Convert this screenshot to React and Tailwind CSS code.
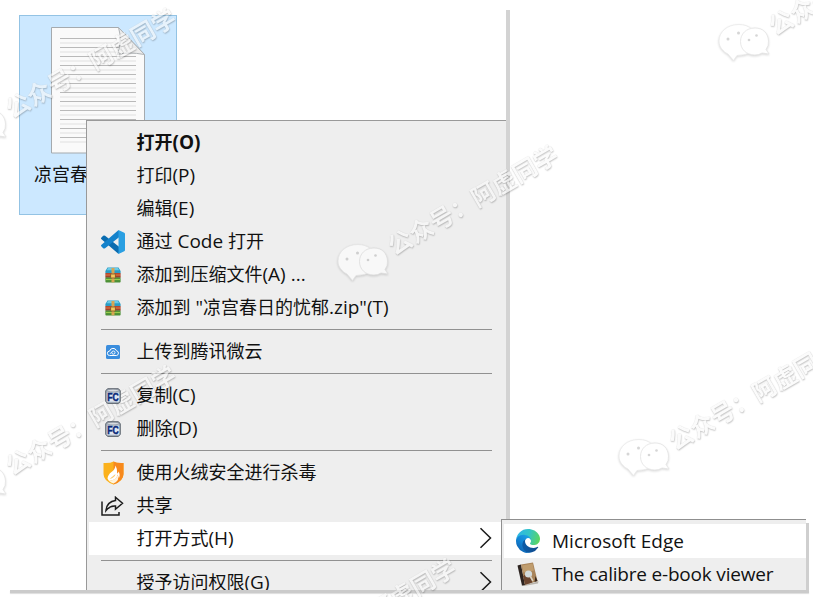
import clsx from 'clsx'

function CodeIcon() {
  return (
    <svg width="24" height="24" viewBox="0 0 100 100">
      <path d="M1 32l8-8q4-3 8 0l58 46v28q-5 0-9-4L1 38q-2-3 0-6z" fill="#0a6cb0" />
      <path d="M1 68l8 8q4 3 8 0l58-46V2q-5 0-9 4L1 62q-2 3 0 6z" fill="#1482cb" />
      <path d="M68 96q4 5 9 2l20-9q3-2 3-6V17q0-4-3-6L77 2q-5-3-9 2 5-2 5 4v84q0 6-5 4z" fill="#2a9fe2" />
    </svg>
  )
}

function ArchiveIcon() {
  return (
    <svg width="16" height="16" viewBox="0 0 16 16">
      <path d="M2.5 0.5h11l2.100 3.500v2.500H0.400V4z" fill="#2b9cc4" />
      <path d="M3 1h10l1.200 2.200H1.800z" fill="#68cbe8" />
      <rect x="0.400" y="6" width="15.200" height="4.500" rx="0.600" fill="#b5482f" />
      <path d="M0.500 10.200h15" stroke="#5b3324" strokeWidth="0.800" />
      <rect x="0.400" y="10.600" width="15.200" height="5" rx="0.800" fill="#4c9036" />
      <path d="M1 12.500h14" stroke="#9acb4c" strokeWidth="1.200" />
      <path d="M1 8h14" stroke="#d9763f" />
      <rect x="6.500" y="1" width="3" height="14.300" fill="#d6a552" />
      <rect x="5.600" y="7" width="4.800" height="4" rx="0.500" fill="#f3c75c" stroke="#6b4520" strokeWidth="0.700" />
    </svg>
  )
}

function CloudIcon() {
  return (
    <svg width="14" height="14" viewBox="0 0 14 14" fill="none" stroke="#fff">
      <rect width="14" height="14" rx="1.5" fill="#3a8ddd" stroke="none" />
      <path d="M3.600 10.500a2.200 2.200 0 0 1 0-4.400 3.600 3.600 0 0 1 6.900-.3A2.400 2.400 0 0 1 10.600 10.500z" />
      <circle cx="7.400" cy="7.600" r="1.600" strokeWidth="0.900" />
      <path d="M3.800 8.800l2-1.500" strokeWidth="0.800" />
    </svg>
  )
}

function FastCopyIcon() {
  return (
    <svg width="16" height="16" viewBox="0 0 16 16">
      <path d="M2.500 0.800h11l1.700 2v10.500l-1.700 2h-11l-1.700-2V2.800z" fill="#b4bfcc" stroke="#4c545e" strokeWidth="1" />
      <ellipse cx="8" cy="2.600" rx="6" ry="1.300" fill="#d8dce1" stroke="#727b86" strokeWidth="0.500" />
      <rect x="1.800" y="4.800" width="12.400" height="8.800" fill="#dde6f1" />
      <text x="8" y="12.800" textAnchor="middle" textLength="11.500" lengthAdjust="spacingAndGlyphs" fontSize="10.500" fontWeight="900" fontFamily="Liberation Sans, sans-serif" fill="#0b2a78" stroke="#0b2a78" strokeWidth="0.500">FC</text>
    </svg>
  )
}

function ShieldIcon() {
  return (
    <svg width="21" height="24" viewBox="0 0 21 24">
      <path d="M10.500 0.500Q14 2.500 20.500 2v11q0 7-10 10.500Q0.500 20 0.500 13V2q6.500.5 10-1.500z" fill="#fbb11c" />
      <path d="M10.500 0.500Q14 2.500 20.500 2v11q0 7-10 10.500z" fill="#f7891d" />
      <path d="M12.500 4.500q-.5 4-4 6.500T4.500 17.500L6 20q8-1 8.500-6.500L16 17q1.500-3.500-.5-6.500-.3 2-1.300 2Q14.500 8 12.500 4.500z" fill="#fff" />
      <path d="M6 20q7-1 9-6.500 2 6-4.500 9-2.500-.8-4.500-2.500z" fill="#fff3dc" />
      <path d="M6.500 18l6-5q-.5 3.500-6 5z" fill="#fbc76a" />
    </svg>
  )
}

function ShareIcon() {
  return (
    <svg className="-ml-px" width="23" height="20" viewBox="0 0 23 20" fill="none" stroke="#1c1c1c" strokeWidth="1.500">
      <path d="M1 5.500V19h17v-3" />
      <path d="M14.500 1.200l7 6-7 6V10Q9 9.500 5 14.500 6 5.500 14.500 4.500z" />
    </svg>
  )
}

function EdgeIcon() {
  return (
    <svg width="24" height="24" viewBox="0 0 256 256">
      <defs>
        <linearGradient id="edgeDark" x1="0.2" y1="0.5" x2="1" y2="0.5">
          <stop offset="0" stopColor="#0c59a4" />
          <stop offset="1" stopColor="#114a8b" />
        </linearGradient>
        <linearGradient id="edgeBlue" x1="0.8" y1="0.2" x2="0.3" y2="0.9">
          <stop offset="0" stopColor="#1b9de2" />
          <stop offset="0.5" stopColor="#1285d6" />
          <stop offset="1" stopColor="#0f66b5" />
        </linearGradient>
        <linearGradient id="edgeGreen" x1="0" y1="0.4" x2="1" y2="0.6">
          <stop offset="0" stopColor="#2db5e8" />
          <stop offset="0.5" stopColor="#34c4c6" />
          <stop offset="1" stopColor="#5cd65c" />
        </linearGradient>
      </defs>
      <path fill="url(#edgeDark)" d="M231 190.500a94 94 0 0 1-10.500 4.700 102 102 0 0 1-36 6.500c-47.300 0-88.500-32.600-88.500-74.400A31.500 31.500 0 0 1 112.500 100c-42.800 1.800-53.800 46.400-53.800 72.500 0 73.900 68 81.400 82.700 81.400 8 0 19.900-2.300 27-4.600l1.400-.4a128.300 128.300 0 0 0 66.600-52.800 4 4 0 0 0-5.400-5.600z" />
      <path fill="url(#edgeBlue)" d="M105.700 241.400a79.200 79.200 0 0 1-22.700-21.300 80.700 80.700 0 0 1 29.500-120c3.100-1.500 8.500-4.100 15.500-4a32.400 32.400 0 0 1 25.700 13 31.900 31.900 0 0 1 6.300 18.700c0-.2 24.500-79.600-80-79.600-43.900 0-80 41.700-80 78.200a130.200 130.200 0 0 0 12.100 56 128 128 0 0 0 156.400 67.100 75.600 75.600 0 0 1-62.800-8z" />
      <path fill="url(#edgeGreen)" d="M152.300 148.900c-.8 1-3.300 2.500-3.300 5.600 0 2.600 1.700 5.100 4.700 7.200 14.400 10 41.500 8.700 41.600 8.700a59.600 59.600 0 0 0 30.300-8.300A61.400 61.400 0 0 0 256 109.200c.3-22.400-8-37.300-11.300-43.900C223.500 23.800 177.700 0 128 0A128 128 0 0 0 0 126.200c.5-36.500 36.800-66 80-66 3.500 0 23.500.3 42 10 16.300 8.600 24.900 19 30.900 29.300 6.200 10.600 7.200 24 7.200 29.400s-2.700 13.400-7.800 20z" />
    </svg>
  )
}

function CalibreIcon() {
  return (
    <svg width="22" height="24" viewBox="0 0 22 24">
      <path d="M4 23.500l15-3.500 2.500-1-.5 2.500L7 24z" fill="#b9b4ac" />
      <path d="M0.500 3.500L4 2.500l4 20.500-3 .5Q3 15 0.500 3.500z" fill="#2d2420" />
      <path d="M4 2.500L16 0.500l4.500 18.500L8 22.800z" fill="#a9845a" />
      <path d="M5 3.500L15.500 1.500l1.500 7-10.500 2z" fill="#c09d6e" />
      <path d="M6 14l5-3 4.500 9.500L8 22.800z" fill="#6b452f" />
      <circle cx="11.500" cy="12" r="3.600" fill="#d3dadb" />
      <path d="M13 14l3 5" stroke="#d9d1c2" strokeWidth="1.500" />
      <path d="M18.500 14l2 5-3 1z" fill="#382519" />
    </svg>
  )
}

function Chevron() {
  return (
    <svg className="mb-[2px] ml-auto shrink-0" width="13" height="22" viewBox="0 0 13 22" fill="none" stroke="#1a1a1a" strokeWidth="1.500">
      <path d="M1.500 1.200L11.500 11l-10 9.800" />
    </svg>
  )
}

const groups = [
  [
    { label: '打开(O)', bold: true },
    { label: '打印(P)' },
    { label: '编辑(E)' },
    { label: '通过 Code 打开', icon: CodeIcon },
    { label: '添加到压缩文件(A) ...', icon: ArchiveIcon },
    { label: '添加到 "凉宫春日的忧郁.zip"(T)', icon: ArchiveIcon },
  ],
  [{ label: '上传到腾讯微云', icon: CloudIcon }],
  [
    { label: '复制(C)', icon: FastCopyIcon },
    { label: '删除(D)', icon: FastCopyIcon },
  ],
  [
    { label: '使用火绒安全进行杀毒', icon: ShieldIcon },
    { label: '共享', icon: ShareIcon },
    { label: '打开方式(H)', submenu: true, active: true },
  ],
  [{ label: '授予访问权限(G)', submenu: true }],
]

// latin runs are set slightly larger than the Chinese around them
function Label({ text }) {
  return text.split(/([ -~]+)/).map((part, i) =>
    i % 2 ? <span key={i} className="text-[19px]">{part}</span> : part
  )
}

// icons and labels stay above the watermark, the menu background below it
function MenuItem({ icon: Icon, label, bold, submenu, active }) {
  return (
    <div className={clsx('ml-[2px] flex h-[33px] shrink-0 items-center pl-3 pr-[14px]', active && 'bg-white')}>
      <div className="relative z-10 mr-[11.500px] flex w-6 shrink-0 justify-center">{Icon && <Icon />}</div>
      <span className={clsx('relative z-10 whitespace-nowrap leading-[27px]', bold && 'font-bold')}>
        <Label text={label} />
      </span>
      {submenu && <Chevron />}
    </div>
  )
}

function ContextMenu() {
  return (
    <div className="absolute left-[86px] top-[120px] flex h-[470px] w-[420px] flex-col overflow-hidden border-l border-t border-[#999] bg-[#eee] pt-[5px]">
      {groups.map((items, i) => (
        <div key={i} className="shrink-0">
          {i > 0 && (
            <div className="flex h-[11px] items-center px-[14px]">
              <div className="h-px w-full bg-[#919191]" />
            </div>
          )}
          {items.map((item) => (
            <MenuItem key={item.label} {...item} />
          ))}
        </div>
      ))}
    </div>
  )
}

function OpenWithMenu() {
  return (
    <div className="absolute left-[501px] top-[519px] h-[71px] w-[305px] overflow-hidden border-l border-t border-[#8f8f8f] bg-[#eee] pt-1 text-[19px]">
      <div className="ml-[2px] flex h-[34px] items-center bg-white pl-3">
        <EdgeIcon />
        <span className="ml-3 whitespace-nowrap">Microsoft Edge</span>
      </div>
      <div className="ml-[2px] flex h-8 items-center pl-3">
        <div className="flex w-6 justify-center"><CalibreIcon /></div>
        <span className="ml-3 whitespace-nowrap tracking-[-0.200px]">The calibre e-book viewer</span>
      </div>
    </div>
  )
}

function FileTile() {
  return (
    <div className="absolute left-[19px] top-[15px] flex h-[200px] w-[158px] flex-col border border-[#93c3e4] bg-[#cce8ff] pt-[10px]">
      <svg className="ml-[30px] shrink-0" width="97" height="129" viewBox="0 0 97 129">
        <path d="M1.500 1.500h67l26 27v98.500h-93z" fill="#fafafa" stroke="#a5aaae" />
        {Array.from({ length: 12 }, (_, i) => (
          <g key={i}>
            <path d={`M10 ${12.5 + i * 9}h${i < 2 ? 57 + i * 3 : 76}`} stroke="#b9b9b9" />
            <path d={`M10 ${17 + i * 9}h${i < 2 ? 58 + i * 4 : 76}`} stroke="#e0e0e0" />
          </g>
        ))}
        <path d="M68.500 1.500q4 13-1 27 10-3 27 0z" fill="#ececec" stroke="#aeb2b5" />
      </svg>
      <div className="ml-[14px] mt-[4px] whitespace-nowrap text-[18px] leading-[30px]">凉宫春日的忧郁</div>
    </div>
  )
}

// each mark starts at its chat bubbles, the text climbs up to the right
const marks = [
  { x: 337, y: 244 },
  { x: 618, y: 439 },
  { x: 718, y: 24 },
  { x: -45, y: 107 },
  { x: -45, y: 464 },
  { x: 235, y: 657 },
]

function Watermark({ x, y }) {
  return (
    <div className="pointer-events-none absolute z-[5] opacity-60" style={{ left: x, top: y }}>
      <svg className="overflow-visible drop-shadow-[0_1px_1px_rgba(0,0,0,0.26)]" width="52" height="38" viewBox="0 0 52 38">
        <path d="M21 0.500C9 .5 1 8 1 17c0 6 4 10.500 9 13l5.500 6.500 3.500-5q18 0 21-15C39 7 31 .5 21 .5z" fill="#fff" stroke="#dcdcdc" strokeWidth="0.800" />
        <path d="M37 4C28 4 22.500 10 22.500 17.500S28 31 37 31q4 0 7-2l7 1-3-4.500q3-4 2.500-8.500C50 9 45 4 37 4z" fill="#fff" stroke="#d2d2d2" strokeWidth="0.800" />
        <g fill="#bbb">
          <circle cx="10" cy="15" r="1.500" />
          <circle cx="20.500" cy="9" r="1.500" />
          <circle cx="31" cy="16" r="1.300" />
          <circle cx="38.500" cy="11.500" r="1.300" />
        </g>
      </svg>
      <div className="absolute left-[51px] top-[-14px] origin-[12px_50%] -rotate-30 whitespace-nowrap text-[24px] font-bold leading-[24px] text-[#fafafa] [text-shadow:0_1px_1.500px_rgba(0,0,0,0.380),0_0_1px_rgba(0,0,0,0.200)]">
        公众号：阿虚同学
      </div>
    </div>
  )
}

export default function App() {
  return (
    <div className="relative h-[597px] w-[813px] overflow-hidden bg-white font-['Open_Sans','Noto_Sans_CJK_SC',sans-serif] text-[18px] text-[#111]">
      <FileTile />
      <div className="absolute left-[506px] top-[10px] h-[509px] w-[4px] bg-[#d3d3d3]" />
      <ContextMenu />
      <OpenWithMenu />
      <div className="absolute left-[806px] top-[523px] h-[70px] w-[3px] bg-[#cfcfcf]" />
      <div className="absolute left-[10px] top-[590px] h-[3px] w-[799px] bg-[#cbcbcb] shadow-[0_1px_1px_#ddd]" />
      {marks.map((m) => (
        <Watermark key={`${m.x},${m.y}`} {...m} />
      ))}
    </div>
  )
}
